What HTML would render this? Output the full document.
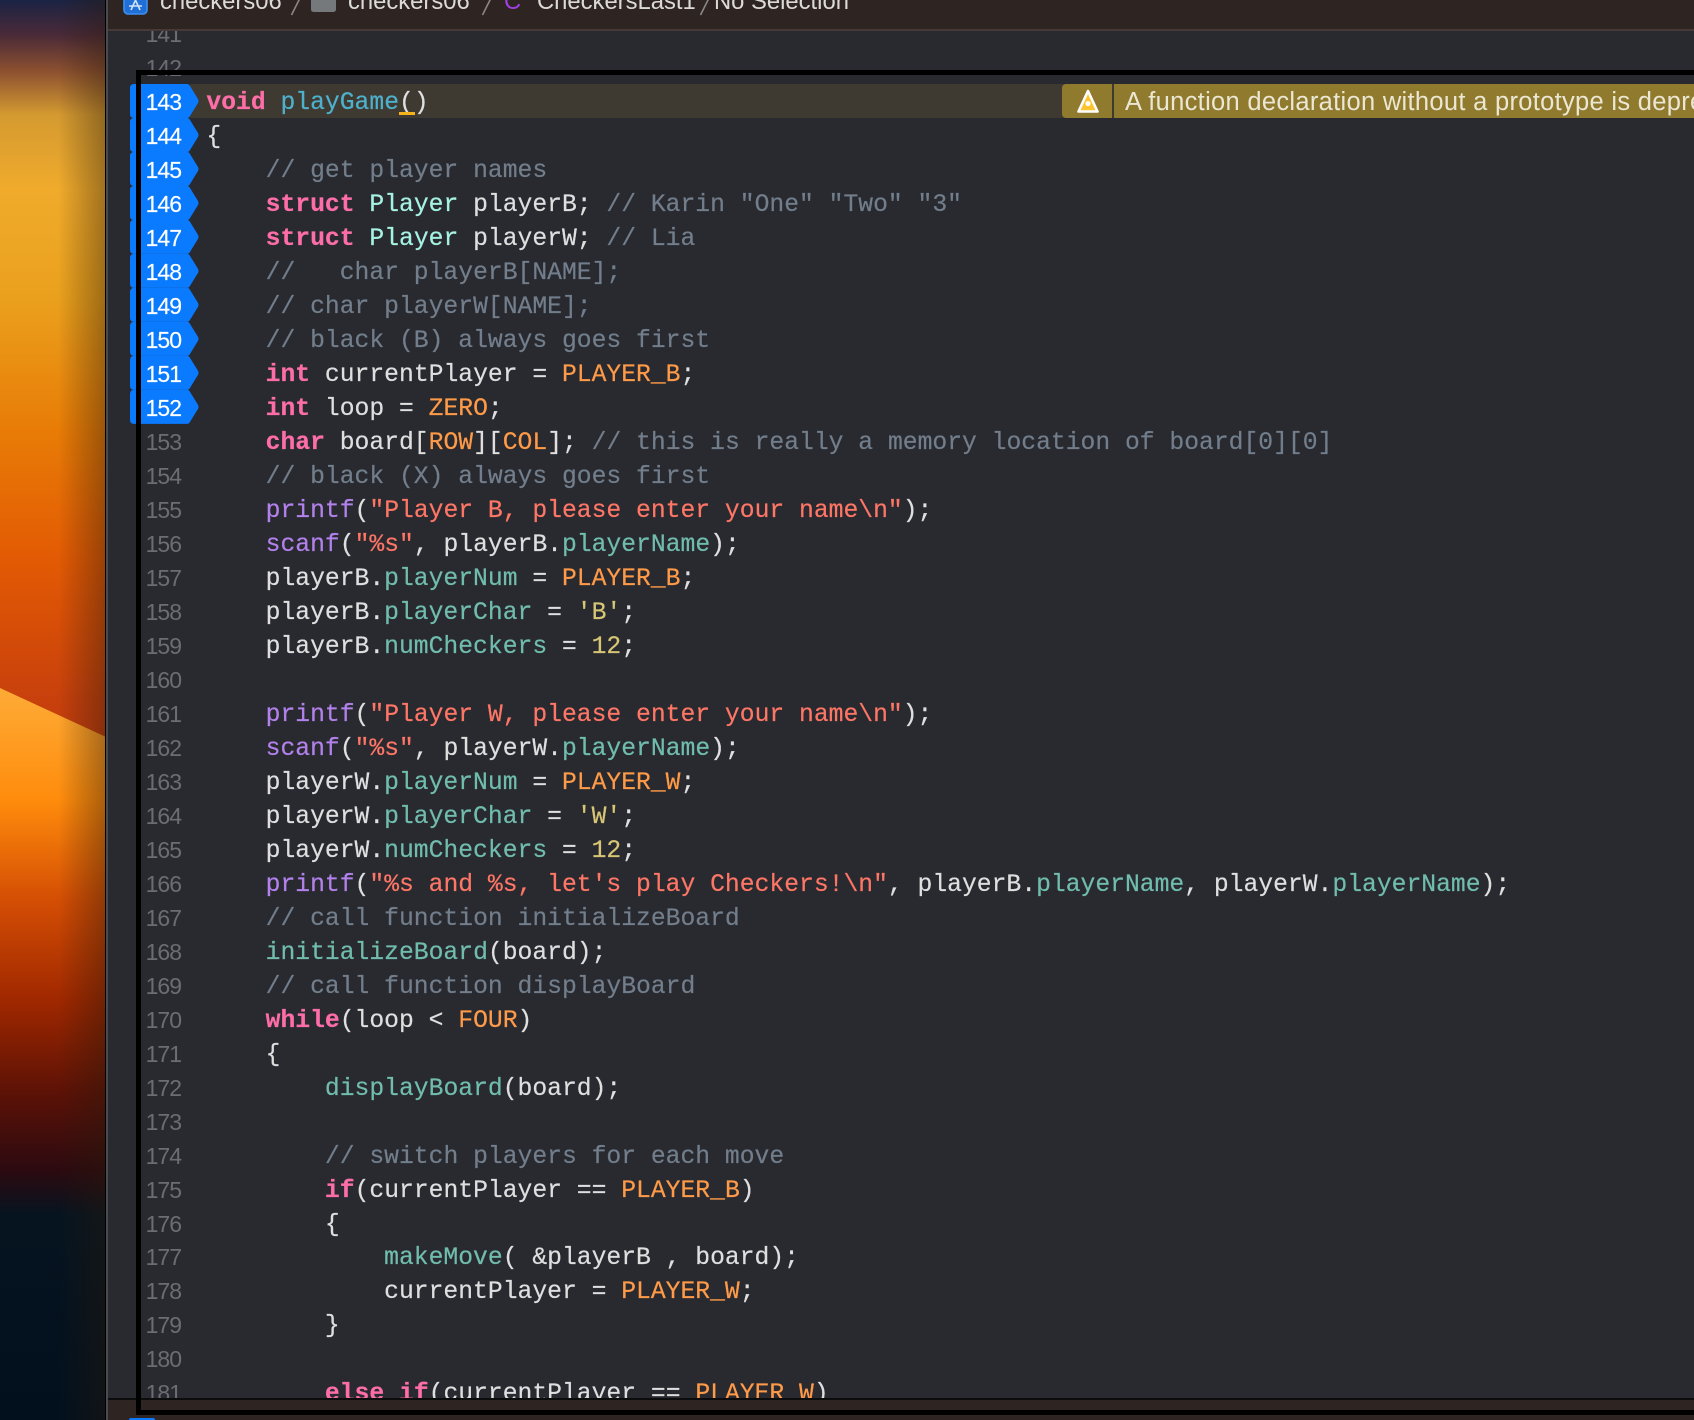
<!DOCTYPE html>
<html lang="en">
<head>
<meta charset="utf-8">
<title>Xcode</title>
<style>
html,body{margin:0;padding:0;width:1694px;height:1420px;overflow:hidden;background:#292a30}
*{box-sizing:border-box}
.abs{position:absolute}
#wall{left:0;top:0;width:106px;height:1420px;background:linear-gradient(180deg,#1a2344 0,#4a2a38 35px,#8a4f30 70px,#d49a30 115px,#f0ab2c 190px,#eaa01c 300px,#e87c06 430px,#e35a04 560px,#c8400c 700px,#c03a0c 760px)}
#wedge{left:0;top:0;width:106px;height:1420px;clip-path:polygon(0 688px,106px 737px,106px 1420px,0 1420px);background:linear-gradient(180deg,#fdab36 690px,#ff8c0c 800px,#d44e04 900px,#a02800 1000px,#5e1206 1090px,#2c0a10 1170px,#061420 1215px,#02101e 1420px)}
#shade{left:0;top:0;width:106px;height:1420px;background:linear-gradient(90deg,rgba(40,25,10,0) 55%,rgba(40,25,10,.4) 100%)}
#sep1{left:105px;top:0;width:1px;height:1420px;background:#000}
#sep2{left:106px;top:0;width:2px;height:1420px;background:#4a4b50;z-index:4}
#ed{left:108px;top:30px;width:1586px;height:1369px;background:#292a30;overflow:hidden}
#top{left:106px;top:0;width:1588px;height:31px;background:#2e2422;border-bottom:2px solid #453a38;z-index:3}
#bot{left:106px;top:1400px;width:1588px;height:20px;background:#2e2422;z-index:3}
#botline{left:106px;top:1398px;width:1588px;height:2px;background:#0c0c0c;z-index:3}
.crumb{position:absolute;top:-13px;font:23.8px/30px "Liberation Sans",sans-serif;color:#dcdad8;white-space:pre;z-index:5}
pre{margin:0;position:absolute;white-space:pre}
#code{left:98.4px;top:-10.96px;font:24.7px/33.98px "Liberation Mono",monospace;color:#dfdfe0;z-index:2;-webkit-text-stroke:.2px currentColor}
#nums{left:18px;top:-11.96px;width:55px;text-align:right;font:23px/33.98px "Liberation Sans",sans-serif;letter-spacing:-1px;color:#6c6d72;z-index:2}
#nums b{font-weight:400;color:#fff;-webkit-text-stroke:.15px #fff}
.k{color:#fd6ea8;font-weight:bold}
.t{color:#a6f2e2}
.f{color:#70bdad}
.d{color:#4eb0cc}
.c{color:#727e8b}
.s{color:#fe7666}
.n{color:#d6c675}
.m{color:#fe9a48}
.p{color:#b281eb}
#hl{left:82px;top:54px;width:1590px;height:34px;background:#3e3a31}
#warnA{left:1062px;top:84px;width:50px;height:34px;background:#8f7a2d;border-radius:4px 0 0 4px;z-index:2}
#warnB{left:1114px;top:84px;width:580px;height:34px;background:#8f7a2d;overflow:hidden;z-index:2;font:25.5px/37px "Liberation Sans",sans-serif;letter-spacing:.3px;color:#ebe7d3;padding-left:11px;white-space:pre}
#under{left:399px;top:112px;width:16px;height:3px;background:#f5b21c;z-index:6}
#fT{left:136px;top:70px;width:1558px;height:5px;background:#000;z-index:6}
#fL{left:136px;top:70px;width:5px;height:1345px;background:#000;z-index:6}
#fB{left:136px;top:1410px;width:1558px;height:5px;background:#000;z-index:6}
#blueB{left:129px;top:1418px;width:26px;height:2px;background:#0a7aff;border-radius:3px 3px 0 0;z-index:6}
svg{position:absolute;overflow:visible}
</style>
</head>
<body>
<div class="abs" id="wall"></div>
<div class="abs" id="wedge"></div>
<div class="abs" id="shade"></div>
<div class="abs" id="sep1"></div>
<div class="abs" id="sep2"></div>

<div class="abs" id="ed">
<div class="abs" id="hl"></div>
<pre id="nums">141
142
<b>143</b>
<b>144</b>
<b>145</b>
<b>146</b>
<b>147</b>
<b>148</b>
<b>149</b>
<b>150</b>
<b>151</b>
<b>152</b>
153
154
155
156
157
158
159
160
161
162
163
164
165
166
167
168
169
170
171
172
173
174
175
176
177
178
179
180
181</pre>
<pre id="code">


<span class="k">void</span> <span class="d">playGame</span>()
{
    <span class="c">// get player names</span>
    <span class="k">struct</span> <span class="t">Player</span> playerB; <span class="c">// Karin "One" "Two" "3"</span>
    <span class="k">struct</span> <span class="t">Player</span> playerW; <span class="c">// Lia</span>
    <span class="c">//   char playerB[NAME];</span>
    <span class="c">// char playerW[NAME];</span>
    <span class="c">// black (B) always goes first</span>
    <span class="k">int</span> currentPlayer = <span class="m">PLAYER_B</span>;
    <span class="k">int</span> loop = <span class="m">ZERO</span>;
    <span class="k">char</span> board[<span class="m">ROW</span>][<span class="m">COL</span>]; <span class="c">// this is really a memory location of board[0][0]</span>
    <span class="c">// black (X) always goes first</span>
    <span class="p">printf</span>(<span class="s">"Player B, please enter your name\n"</span>);
    <span class="p">scanf</span>(<span class="s">"%s"</span>, playerB.<span class="f">playerName</span>);
    playerB.<span class="f">playerNum</span> = <span class="m">PLAYER_B</span>;
    playerB.<span class="f">playerChar</span> = <span class="n">'B'</span>;
    playerB.<span class="f">numCheckers</span> = <span class="n">12</span>;

    <span class="p">printf</span>(<span class="s">"Player W, please enter your name\n"</span>);
    <span class="p">scanf</span>(<span class="s">"%s"</span>, playerW.<span class="f">playerName</span>);
    playerW.<span class="f">playerNum</span> = <span class="m">PLAYER_W</span>;
    playerW.<span class="f">playerChar</span> = <span class="n">'W'</span>;
    playerW.<span class="f">numCheckers</span> = <span class="n">12</span>;
    <span class="p">printf</span>(<span class="s">"%s and %s, let's play Checkers!\n"</span>, playerB.<span class="f">playerName</span>, playerW.<span class="f">playerName</span>);
    <span class="c">// call function initializeBoard</span>
    <span class="f">initializeBoard</span>(board);
    <span class="c">// call function displayBoard</span>
    <span class="k">while</span>(loop &lt; <span class="m">FOUR</span>)
    {
        <span class="f">displayBoard</span>(board);

        <span class="c">// switch players for each move</span>
        <span class="k">if</span>(currentPlayer == <span class="m">PLAYER_B</span>)
        {
            <span class="f">makeMove</span>( &amp;playerB , board);
            currentPlayer = <span class="m">PLAYER_W</span>;
        }

        <span class="k">else</span> <span class="k">if</span>(currentPlayer == <span class="m">PLAYER_W</span>)</pre>
</div>

<!-- breakpoints -->
<svg class="abs" style="left:0;top:0;z-index:1" width="1694" height="1420">
<g fill="#0a7aff">
<path d="M134 84H187Q189 84 190 86L198 99Q199 101 198 103L190 116Q189 118 187 118H134Q130 118 130 114V88Q130 84 134 84Z"/>
<path transform="translate(0,33.98)" d="M134 84H187Q189 84 190 86L198 99Q199 101 198 103L190 116Q189 118 187 118H134Q130 118 130 114V88Q130 84 134 84Z"/>
<path transform="translate(0,67.96)" d="M134 84H187Q189 84 190 86L198 99Q199 101 198 103L190 116Q189 118 187 118H134Q130 118 130 114V88Q130 84 134 84Z"/>
<path transform="translate(0,101.94)" d="M134 84H187Q189 84 190 86L198 99Q199 101 198 103L190 116Q189 118 187 118H134Q130 118 130 114V88Q130 84 134 84Z"/>
<path transform="translate(0,135.92)" d="M134 84H187Q189 84 190 86L198 99Q199 101 198 103L190 116Q189 118 187 118H134Q130 118 130 114V88Q130 84 134 84Z"/>
<path transform="translate(0,169.9)" d="M134 84H187Q189 84 190 86L198 99Q199 101 198 103L190 116Q189 118 187 118H134Q130 118 130 114V88Q130 84 134 84Z"/>
<path transform="translate(0,203.88)" d="M134 84H187Q189 84 190 86L198 99Q199 101 198 103L190 116Q189 118 187 118H134Q130 118 130 114V88Q130 84 134 84Z"/>
<path transform="translate(0,237.86)" d="M134 84H187Q189 84 190 86L198 99Q199 101 198 103L190 116Q189 118 187 118H134Q130 118 130 114V88Q130 84 134 84Z"/>
<path transform="translate(0,271.84)" d="M134 84H187Q189 84 190 86L198 99Q199 101 198 103L190 116Q189 118 187 118H134Q130 118 130 114V88Q130 84 134 84Z"/>
<path transform="translate(0,305.82)" d="M134 84H187Q189 84 190 86L198 99Q199 101 198 103L190 116Q189 118 187 118H134Q130 118 130 114V88Q130 84 134 84Z"/>
</g>
</svg>

<div class="abs" id="warnA">
<svg width="50" height="34" style="left:0;top:0">
<path d="M26 7L35.5 27.5H16.5Z" fill="#ffc42e" stroke="#fff" stroke-width="2.6" stroke-linejoin="round"/>
<circle cx="26" cy="19.5" r="2.6" fill="#fff"/>
</svg>
</div>
<div class="abs" id="warnB">A function declaration without a prototype is deprecated</div>
<div class="abs" id="under"></div>

<div class="abs" id="top"></div>
<svg style="left:123px;top:-10px;z-index:5" width="25" height="25">
<rect x="1" y="1" width="23" height="23" rx="4" fill="#1f6fd6" stroke="#3d8ff0" stroke-width="1.6"/>
<path d="M8 20L13 9M17 20L12 9M6 16H19" stroke="#cfe2fa" stroke-width="1.6" fill="none"/>
</svg>
<span class="crumb" style="left:160px">checkers06</span>
<svg style="left:288px;top:0;z-index:5" width="14" height="16"><path d="M12 -2L3.5 15" stroke="#8a8684" stroke-width="1.6" fill="none"/></svg>
<svg style="left:311px;top:-6px;z-index:5" width="25" height="18"><rect width="25" height="18" rx="2.5" fill="#76797b"/></svg>
<span class="crumb" style="left:348px">checkers06</span>
<svg style="left:479px;top:0;z-index:5" width="14" height="16"><path d="M12 -2L3.5 15" stroke="#8a8684" stroke-width="1.6" fill="none"/></svg>
<span class="crumb" style="left:504px;color:#a040e0">C</span>
<span class="crumb" style="left:537px">CheckersLast1</span>
<svg style="left:697px;top:0;z-index:5" width="14" height="16"><path d="M12 -2L3.5 15" stroke="#8a8684" stroke-width="1.6" fill="none"/></svg>
<span class="crumb" style="left:714px">No Selection</span>

<div class="abs" id="botline"></div>
<div class="abs" id="bot"></div>
<div class="abs" id="fT"></div>
<div class="abs" id="fL"></div>
<div class="abs" id="fB"></div>
<div class="abs" id="blueB"></div>
</body>
</html>
